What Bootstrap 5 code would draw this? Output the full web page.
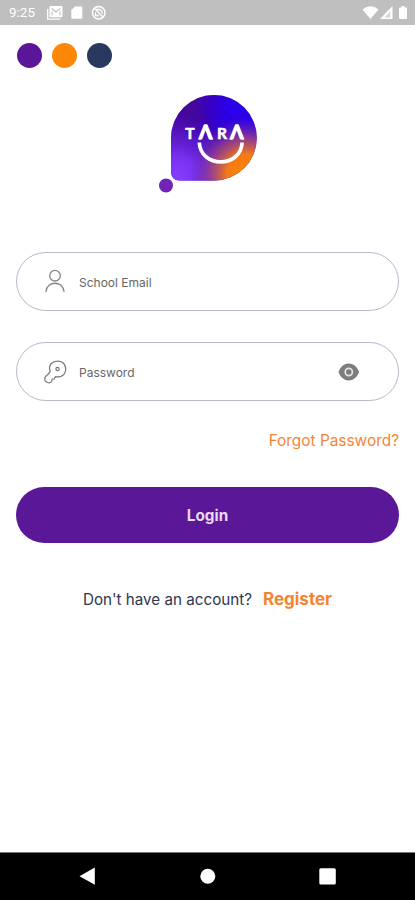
<!DOCTYPE html>
<html lang="en">
<head>
<meta charset="utf-8">
<meta name="viewport" content="width=device-width, initial-scale=1">
<title>Tara - Login</title>
<link href="https://cdn.jsdelivr.net/npm/bootstrap@5.3.0/dist/css/bootstrap.min.css" rel="stylesheet">
<style>
  body { font-family: Inter, Roboto, sans-serif; height: 900px; overflow: hidden; background: #fff; }
  svg { display: block; flex: none; }
  .status { height: 25px; background: #bfbfbf; padding: 0 8px 0 9px; }
  .clock { font: 400 13.5px/25px Roboto, sans-serif; width: 38px; }
  .dots { padding: 18px 0 0 16.5px; gap: 10.2px; }
  .dot { width: 25px; height: 25px; }
  .logo { margin-top: 26px; }
  .login-form { margin-top: 57px; }
  .field { height: 59px; border: 1px solid #b9b7cc; padding: 0 38px 0 25px; }
  .field + .field { margin-top: 31px; }
  .field input { font-size: 12px; line-height: 20px; color: #555; margin: 3px 0 0 11px; }
  .field input::placeholder { color: #666; opacity: 1; }
  .forgot { color: #f5853a; font-size: 15.4px; line-height: 20px; margin-top: 30px; }
  .login { height: 56px; margin-top: 35px; padding-top: 8px; background: #5a1797; color: #e6dcf0; font-size: 15.3px; font-weight: 700; }
  .login:hover { background: #4c1282; color: #fff; }
  .signup { margin-top: 44px; gap: 11px; color: #2f3650; font-size: 15.2px; line-height: 24px; }
  .signup span { padding-top: 1px; }
  .register { color: #f5842f; font-size: 17px; font-weight: 700; }
  .sysnav { height: 48px; background: #000; border-top: 1px solid #777; }
</style>
</head>
<body class="d-flex flex-column">
<header class="status d-flex align-items-center text-white">
  <span class="clock">9:25</span>
  <svg width="60" height="18" viewBox="47 4 60 18" fill="none" stroke="#fff">
    <path d="M47.7 9v10.2H60" stroke-width="1.3"/>
    <rect x="49.5" y="6" width="13" height="11.3" rx="1.3" fill="#fff" stroke="none"/>
    <path d="M51.800 8.500l4.200 3.500L60.200 8.500M52 15.200v-4M60 15.200v-4" stroke="#bfbfbf" stroke-width="1.100"/>
    <path d="M75 6.500h6.300q1 0 1 1v10.200q0 1-1 1h-9q-1 0-1-1V10z" fill="#fff" stroke="none"/>
    <circle cx="98.700" cy="12.700" r="6.300" stroke-width="1.500"/>
    <path d="M94.500 8.500l8.500 8.500M96 9.500h3a3.200 3.200 0 0 1 3 4.200M95.500 12v3.500h3.500" stroke-width="1.300"/>
  </svg>
  <svg class="ms-auto" width="46" height="18" viewBox="361 4 46 18" fill="#fff">
    <path d="M362.500 9.500q8-6.500 16 0l-8 9.500z"/>
    <path d="M392.500 6v13h-12.500z"/>
    <path d="M390.200 11.500v6h-5.800z" fill="#bfbfbf" opacity=".65"/>
    <path d="M401.500 6h3v1.500h2q1 0 1 1v9.500q0 1-1 1h-6.500q-1 0-1-1V8.500q0-1 1-1h1.500z"/>
  </svg>
</header>

<main class="flex-grow-1">
  <div class="dots d-flex">
    <span class="dot rounded-circle" style="background:#5a1599"></span>
    <span class="dot rounded-circle" style="background:#ff8708"></span>
    <span class="dot rounded-circle" style="background:#28385e"></span>
  </div>

  <div class="logo d-flex justify-content-center">
    <svg width="99" height="101" viewBox="158 94 99 101" role="img" aria-label="TARA">
      <defs>
        <linearGradient id="base" x1="0" y1=".55" x2=".9" y2=".15">
          <stop offset="0" stop-color="#5312b4"/><stop offset=".5" stop-color="#3800c0"/><stop offset="1" stop-color="#3000e8"/>
        </linearGradient>
        <radialGradient id="blue" cx=".7" cy=".17" r=".42">
          <stop offset="0" stop-color="#2a00f0"/><stop offset="1" stop-color="#2c00e0" stop-opacity="0"/>
        </radialGradient>
        <radialGradient id="dark" cx=".22" cy=".15" r=".55">
          <stop offset="0" stop-color="#480898"/><stop offset="1" stop-color="#3f0098" stop-opacity="0"/>
        </radialGradient>
        <radialGradient id="violet" cx=".08" cy=".95" r=".72">
          <stop offset="0" stop-color="#873cff"/><stop offset=".3" stop-color="#7931f0"/><stop offset="1" stop-color="#5a18c8" stop-opacity="0"/>
        </radialGradient>
        <radialGradient id="orange" cx=".88" cy=".92" r=".66">
          <stop offset="0" stop-color="#ff8500"/><stop offset=".35" stop-color="#f27a18"/><stop offset=".65" stop-color="#a44880" stop-opacity=".75"/><stop offset="1" stop-color="#6425b5" stop-opacity="0"/>
        </radialGradient>
        <path id="bubble" d="M214 95a42.800 42.800 0 0 1 0 85.600h-34q-9 0-9-9v-33.800a43 43 0 0 1 43-42.800z"/>
      </defs>
      <use href="#bubble" fill="url(#base)"/>
      <use href="#bubble" fill="url(#dark)"/>
      <use href="#bubble" fill="url(#blue)"/>
      <use href="#bubble" fill="url(#violet)"/>
      <use href="#bubble" fill="url(#orange)"/>
      <circle cx="166" cy="185.500" r="7" fill="#7124b5"/>
      <g fill="#fff" stroke="#fff" stroke-linejoin="round" font-family="Lato, sans-serif" font-weight="700" text-anchor="middle">
        <text x="190" y="138.800" font-size="15.500" stroke-width=".6">T</text>
        <text x="205.500" y="138.800" font-size="19" stroke-width="1.300">Λ</text>
        <text x="222" y="138.800" font-size="15.500" stroke-width=".6">R</text>
        <text x="236.800" y="138.800" font-size="19" stroke-width="1.300">Λ</text>
      </g>
      <path d="M199.300 142.500c1 25.700 41.800 25.700 42.800 0" fill="none" stroke="#fff" stroke-width="3.700"/>
    </svg>
  </div>

  <form class="login-form px-3">
    <label class="field rounded-pill d-flex align-items-center">
      <svg width="26" height="26" viewBox="42 269 26 26" fill="none" stroke="#858585" stroke-width="1.300" stroke-linecap="round">
        <circle cx="55" cy="275.700" r="5.300"/>
        <path d="M46 291.500c1-11 17-11 18 0"/>
      </svg>
      <input class="form-control border-0 shadow-none bg-transparent p-0" type="email" placeholder="School Email">
    </label>
    <label class="field rounded-pill d-flex align-items-center">
      <svg width="26" height="26" viewBox="42 358 26 26" fill="none" stroke="#777" stroke-width="1.200" stroke-linejoin="round">
        <path d="M50.300 370.500C47.500 363 53 360.200 58 360.200c5 0 7.700 3.600 7.700 7.800 0 6-5 8.800-10.200 7.600l-1.200 2.200-2.300.2-.3 2.200c-1.500 2.600-5.500 1.800-6.700-.7-.8-2.700 1-4.800 2.800-6z"/>
        <circle cx="57.500" cy="368" r="1.600"/>
      </svg>
      <input class="form-control border-0 shadow-none bg-transparent p-0" type="password" placeholder="Password">
      <svg width="22" height="20" viewBox="338 361 22 20">
        <path d="M338.500 371c4-11.300 16.500-11.300 20.500 0-4 11.300-16.500 11.300-20.500 0z" fill="#7d7d7d"/>
        <circle cx="348.800" cy="371" r="3.600" fill="none" stroke="#e6e6e6" stroke-width="1.700"/>
      </svg>
    </label>
    <div class="text-end"><a class="forgot d-inline-block text-decoration-none" href="#">Forgot Password?</a></div>
    <button class="login btn border-0 rounded-pill w-100" type="button">Login</button>
    <div class="signup d-flex justify-content-center">
      <span>Don't have an account?</span>
      <a class="register text-decoration-none" href="#">Register</a>
    </div>
  </form>
</main>

<footer class="sysnav">
  <svg width="415" height="47" viewBox="0 853 415 47" fill="#fff">
    <path d="M79.500 876.200l15.300-8.700v17.200z"/>
    <circle cx="207.800" cy="876.200" r="7.500"/>
    <rect x="319.300" y="868.300" width="16.500" height="16.200" rx="1.500"/>
  </svg>
</footer>
<script src="https://cdn.jsdelivr.net/npm/bootstrap@5.3.0/dist/js/bootstrap.bundle.min.js"></script>
</body>
</html>
